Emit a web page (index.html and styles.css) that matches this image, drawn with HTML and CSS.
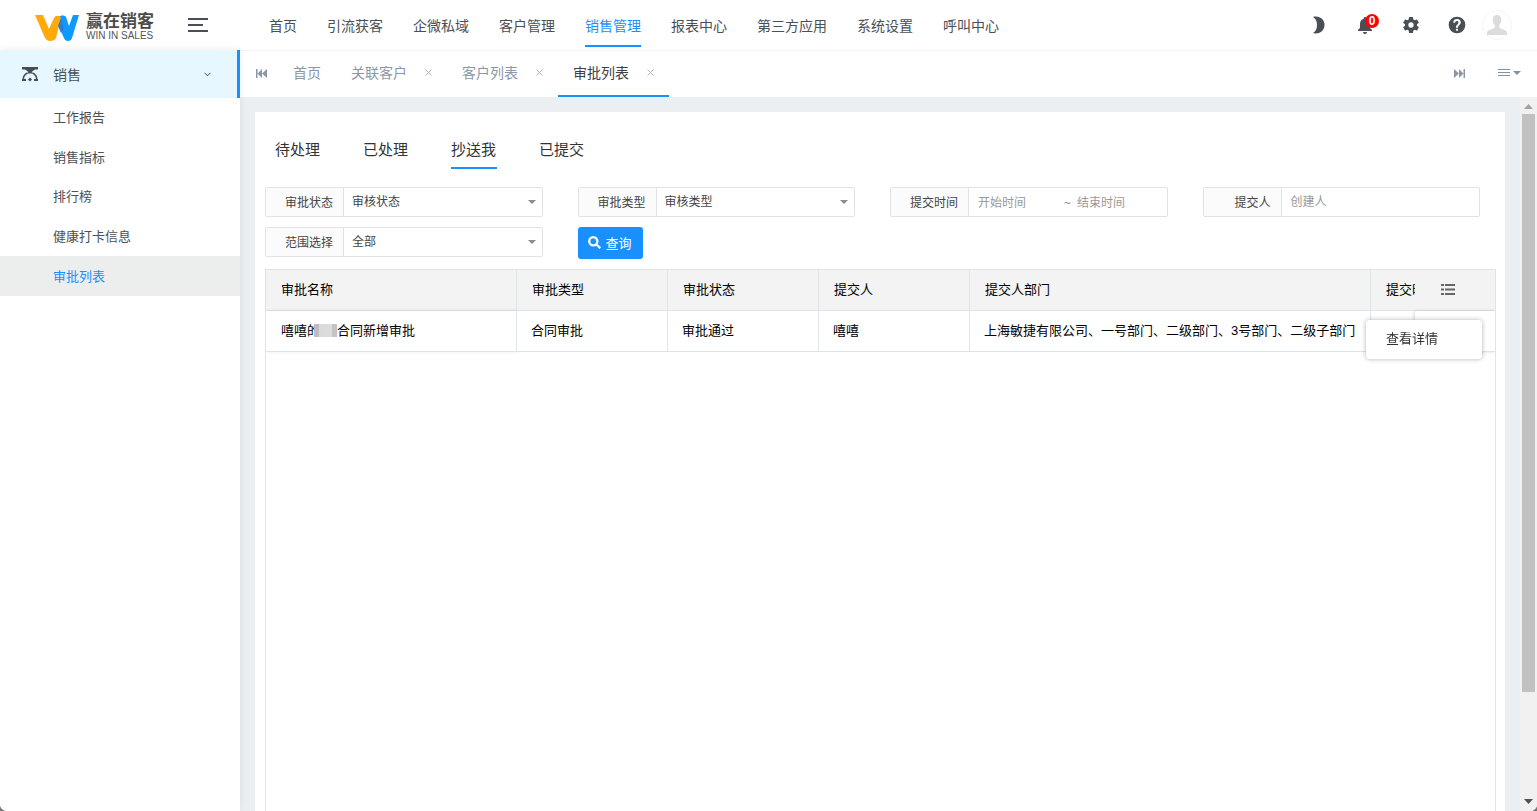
FILE: index.html
```html
<!DOCTYPE html>
<html lang="zh-CN">

<head>
    <meta charset="UTF-8">
    <meta name="viewport" content="width=device-width, initial-scale=1.0">
    <title>审批列表</title>
    <link rel="stylesheet" href="styles.css">
</head>

<body>
    <div class="app">
        <header class="header">
            <div class="brand">
                <svg class="brand-mark" width="44" height="26" viewBox="0 0 44 26">
                    <path fill="#0d99ff" d="M24 2c1-2 6-2 7 0l3 9 4-11h6L37 23c-1 4-7 4-8 0l-6-13z"/>
                    <path fill="#ffa90a" d="M0 0h8l6 14 5-11c1-3 6-3 7 0l-5 20c-2 4-9 4-11 0z"/>
                    <path fill="#2b7fd0" d="M26 3l3 11-3 4-3-7z"/>
                </svg>
                <div class="brand-text">
                    <span class="brand-cn">赢在销客</span>
                    <span class="brand-en">WIN IN SALES</span>
                </div>
            </div>
            <button class="icon-btn menu-toggle" aria-label="菜单">
                <svg width="20" height="14" viewBox="0 0 20 14" fill="#4a4f55">
                    <path d="M0 0h20v2H0zM0 6h15v2H0zM0 12h20v2H0z"/>
                </svg>
            </button>
            <nav class="nav">
                <a href="#">首页</a>
                <a href="#">引流获客</a>
                <a href="#">企微私域</a>
                <a href="#">客户管理</a>
                <a href="#" class="active">销售管理</a>
                <a href="#">报表中心</a>
                <a href="#">第三方应用</a>
                <a href="#">系统设置</a>
                <a href="#">呼叫中心</a>
            </nav>
            <div class="tools">
                <button class="icon-btn tool" aria-label="夜间模式">
                    <svg width="14" height="18" viewBox="0 0 14 18"><path d="M1 1c2-.7 5-.5 7 .5a8.500 8.500 0 0 1 0 15C6 17.500 3 17.700 1 17c3-2 4-4.500 4-8s-1-6-4-8z"/></svg>
                </button>
                <button class="icon-btn tool" aria-label="消息">
                    <svg width="16" height="18" viewBox="0 0 16 18"><path d="M8 1a1.300 1.300 0 0 0-1.300 1.300v.5C4.400 3.400 3 5.400 3 8v4L1 14v1h14v-1l-2-2V8c0-2.600-1.400-4.600-3.700-5.200v-.5A1.300 1.300 0 0 0 8 1zM6 16a2 2 0 0 0 4 0z"/></svg>
                    <span class="badge">0</span>
                </button>
                <button class="icon-btn tool" aria-label="设置">
                    <svg width="20" height="20" viewBox="0 0 24 24"><path d="M19.140 12.940a7.500 7.500 0 0 0 0-1.880l2.030-1.580a.5.500 0 0 0 .12-.61l-1.920-3.320a.5.500 0 0 0-.59-.22l-2.390.96a7 7 0 0 0-1.620-.94l-.36-2.540a.5.500 0 0 0-.48-.41h-3.840a.5.500 0 0 0-.47.410l-.36 2.540a7.300 7.300 0 0 0-1.620.94l-2.390-.96a.5.500 0 0 0-.59.220L2.740 8.870a.5.500 0 0 0 .12.610l2.030 1.580a7.500 7.500 0 0 0 0 1.880l-2.030 1.580a.5.500 0 0 0-.12.610l1.920 3.320c.12.220.37.290.59.220l2.390-.96c.5.380 1.030.7 1.620.94l.36 2.540c.05.240.24.410.48.410h3.840c.24 0 .44-.17.470-.41l.36-2.540a7.300 7.300 0 0 0 1.620-.94l2.390.96c.22.080.47 0 .59-.22l1.920-3.320a.5.500 0 0 0-.12-.61zM12 15.200a3.200 3.200 0 1 1 0-6.400 3.200 3.200 0 0 1 0 6.400z"/></svg>
                </button>
                <button class="icon-btn tool" aria-label="帮助">
                    <svg width="20" height="20" viewBox="0 0 24 24"><path d="M12 2a10 10 0 1 0 0 20 10 10 0 0 0 0-20zm1.200 17h-2.500v-2.500h2.500zm2.200-7.600l-.9.900c-.9.900-1.300 1.500-1.300 3h-2.500v-.6c0-1.100.5-2.100 1.200-2.800l1.300-1.300a2 2 0 1 0-3.400-1.400H7.500a4.500 4.500 0 1 1 9 0c0 .9-.5 1.600-1.100 2.200z"/></svg>
                </button>
                <button class="icon-btn avatar" aria-label="个人中心">
                    <svg width="20" height="20" viewBox="0 0 20 20" fill="#dcdcdc"><path d="M10 0c3 0 4.500 2 4.300 5-.1 2.400-1 4-2.100 5.200v2.300c1 1.500 6.800 2 7.800 4.500v3H0v-3c1-2.500 6.800-3 7.800-4.500v-2.300C6.700 9 5.800 7.400 5.700 5 5.500 2 7 0 10 0z"/></svg>
                </button>
            </div>
        </header>

        <div class="layout">
            <aside class="sidebar">
                <a href="#" class="side-title">
                    <svg width="16" height="15" viewBox="0 0 16 15">
                        <path fill="#464c52" d="M0 0h16v2.500h-3L9.500 5l1.500 1.500H5L6.500 5 3 2.500H0z"/>
                        <path fill="none" stroke="#464c52" stroke-width="1.600" d="M5.500 6C2.500 7.200 1.200 10 1.200 13M10.500 6c3 1.200 4.300 4 4.300 7"/>
                        <path fill="#464c52" d="M0 12h4v2H0zM12 12h4v2h-4zM8 10.500l2 2-2 2-2-2z"/>
                    </svg>
                    <span>销售</span>
                    <svg class="side-arrow" width="7" height="5" viewBox="0 0 7 5"><path fill="none" stroke="#50565c" d="M.5.800l3 3 3-3"/></svg>
                </a>
                <nav class="side-list">
                    <a href="#">工作报告</a>
                    <a href="#">销售指标</a>
                    <a href="#">排行榜</a>
                    <a href="#">健康打卡信息</a>
                    <a href="#" class="active">审批列表</a>
                </nav>
            </aside>

            <div class="main">
                <div class="page-tabs">
                    <button class="icon-btn tabs-prev" aria-label="向左">
                        <svg width="11" height="9" viewBox="0 0 11 9" fill="#8c97a6"><path d="M0 0h1.500v9H0zM6 0v9L1.500 4.500zM11 0v9L6 4.500z"/></svg>
                    </button>
                    <div class="page-tab"><a href="#">首页</a></div>
                    <div class="page-tab"><a href="#">关联客户</a><button class="close" aria-label="关闭"><svg width="7" height="7" viewBox="0 0 7 7"><path d="M.5.500l6 6M6.500.500l-6 6"/></svg></button></div>
                    <div class="page-tab"><a href="#">客户列表</a><button class="close" aria-label="关闭"><svg width="7" height="7" viewBox="0 0 7 7"><path d="M.5.500l6 6M6.500.500l-6 6"/></svg></button></div>
                    <div class="page-tab active"><a href="#">审批列表</a><button class="close" aria-label="关闭"><svg width="7" height="7" viewBox="0 0 7 7"><path d="M.5.500l6 6M6.500.500l-6 6"/></svg></button></div>
                    <div class="tabs-right">
                        <button class="icon-btn" aria-label="向右">
                            <svg width="11" height="9" viewBox="0 0 11 9" fill="#8c97a6"><path d="M9.500 0H11v9H9.500zM5 0v9l4.500-4.500zM0 0v9l5-4.500z"/></svg>
                        </button>
                        <button class="icon-btn" aria-label="标签操作">
                            <svg width="23" height="8" viewBox="0 0 23 8" fill="#8190a3"><path d="M0 0h12v1H0zM0 3h12v1H0zM0 6h12v1H0zM15 2h8l-4 4z"/></svg>
                        </button>
                    </div>
                </div>

                <div class="view">
                    <div class="card">
                        <nav class="status-tabs">
                            <a href="#">待处理</a>
                            <a href="#">已处理</a>
                            <a href="#" class="active">抄送我</a>
                            <a href="#">已提交</a>
                        </nav>

                        <form class="filters">
                            <div class="field">
                                <label for="status">审批状态</label>
                                <div class="control select">
                                    <select id="status"><option>审核状态</option></select>
                                </div>
                            </div>
                            <div class="field">
                                <label for="type">审批类型</label>
                                <div class="control select">
                                    <select id="type"><option>审核类型</option></select>
                                </div>
                            </div>
                            <div class="field">
                                <label for="start">提交时间</label>
                                <div class="control range">
                                    <input type="text" id="start" placeholder="开始时间">
                                    <span>~</span>
                                    <input type="text" id="end" placeholder="结束时间" aria-label="结束时间">
                                </div>
                            </div>
                            <div class="field">
                                <label for="creator">提交人</label>
                                <div class="control">
                                    <input type="text" id="creator" placeholder="创建人">
                                </div>
                            </div>
                            <div class="field">
                                <label for="scope">范围选择</label>
                                <div class="control select">
                                    <select id="scope"><option>全部</option></select>
                                </div>
                            </div>
                            <button type="button" class="search-btn">
                                <svg width="13" height="13" viewBox="0 0 13 13"><path fill="none" stroke="#fff" stroke-width="2.300" d="M5.300 1.200a4.100 4.100 0 1 1 0 8.200 4.100 4.100 0 0 1 0-8.200zM8.500 8.500l3.700 3.700"/></svg>
                                <span>查询</span>
                            </button>
                        </form>

                        <div class="table-box">
                            <table class="table">
                                <colgroup>
                                    <col class="col-name">
                                    <col class="col-mid">
                                    <col class="col-mid">
                                    <col class="col-mid">
                                    <col class="col-dept">
                                    <col class="col-time">
                                    <col class="col-action">
                                </colgroup>
                                <thead>
                                    <tr>
                                        <th>审批名称</th>
                                        <th>审批类型</th>
                                        <th>审批状态</th>
                                        <th>提交人</th>
                                        <th>提交人部门</th>
                                        <th>提交时间</th>
                                        <th class="fixed" aria-label="操作">
                                            <svg width="14" height="11" viewBox="0 0 14 11" fill="#666"><path d="M0 0h3v2H0zM4 0h10v2H4zM0 4.500h3v2H0zM4 4.500h10v2H4zM0 9h3v2H0zM4 9h10v2H4z"/></svg>
                                        </th>
                                    </tr>
                                </thead>
                                <tbody>
                                    <tr>
                                        <td class="name">嘻嘻的<span class="mask"></span>合同新增审批</td>
                                        <td>合同审批</td>
                                        <td>审批通过</td>
                                        <td>嘻嘻</td>
                                        <td>上海敏捷有限公司、一号部门、二级部门、3号部门、二级子部门</td>
                                        <td></td>
                                        <td class="fixed"></td>
                                    </tr>
                                </tbody>
                            </table>
                            <div class="popup">
                                <a href="#">查看详情</a>
                            </div>
                        </div>
                    </div>
                    <div class="scrollbar">
                        <svg width="9" height="5" viewBox="0 0 9 5" fill="#a3a3a3"><path d="M4.500 0L9 5H0z"/></svg>
                        <div class="track"><div class="thumb"></div></div>
                        <svg width="9" height="5" viewBox="0 0 9 5" fill="#505050"><path d="M4.500 5L9 0H0z"/></svg>
                    </div>
                </div>
            </div>
        </div>
    </div>
</body>

</html>
```

FILE: styles.css
```css
* {
    box-sizing: border-box;
}

body {
    margin: 0;
    background: #777;
    font-family: "Liberation Sans", "Noto Sans CJK SC", sans-serif;
    font-size: 14px;
    color: #333;
}

a {
    color: inherit;
    text-decoration: none;
}

button, input, select {
    font-family: inherit;
    margin: 0;
}

svg {
    display: block;
}

.app {
    display: flex;
    flex-direction: column;
    height: 100vh;
    background: #fff;
    border-radius: 0 0 7px 7px;
    overflow: hidden;
}

.icon-btn {
    display: flex;
    align-items: center;
    justify-content: center;
    padding: 0;
    border: none;
    background: none;
    cursor: pointer;
}

/* header */
.header {
    display: flex;
    align-items: center;
    height: 50px;
    flex: none;
    padding-right: 25px;
    background: #fff;
}

.brand {
    display: flex;
    align-items: center;
    gap: 7px;
    width: 188px;
    padding: 6px 0 0 35px;
}

.brand-text {
    display: flex;
    flex-direction: column;
    white-space: nowrap;
}

.brand-cn {
    font-size: 17px;
    line-height: 16px;
    font-weight: bold;
    color: #4c4c4c;
}

.brand-en {
    font-size: 10px;
    line-height: 12px;
    color: #555;
}

.menu-toggle {
    width: 20px;
    height: 50px;
    margin-right: 46px;
}

.nav {
    display: flex;
    flex: 1;
    white-space: nowrap;
}

.nav a {
    margin: 0 15px;
    height: 44px;
    line-height: 46px;
    border-bottom: 2px solid transparent;
    color: #4a4f55;
}

.nav .active {
    color: #1890ff;
    border-color: #1890ff;
}

.tools {
    display: flex;
    align-items: center;
    fill: #4a4f55;
}

.tool {
    position: relative;
    width: 46px;
    height: 50px;
}

.badge {
    position: absolute;
    top: 14px;
    left: 23px;
    width: 14px;
    height: 14px;
    border-radius: 50%;
    background: #f00;
    color: #fff;
    font-size: 12px;
    font-weight: bold;
    line-height: 14px;
    text-align: center;
}

.avatar {
    width: 30px;
    height: 30px;
    margin-left: 2px;
    border: 1px solid #f5f5f5;
    border-radius: 50%;
}

.layout {
    display: flex;
    flex: 1;
    min-height: 0;
}

/* sidebar */
.sidebar {
    position: relative;
    z-index: 1;
    width: 240px;
    flex: none;
    background: #fff;
    box-shadow: 0 0 8px rgba(0, 0, 0, 0.08);
    color: #4a4f55;
}

.side-title {
    display: flex;
    align-items: center;
    height: 48px;
    padding: 0 26px 0 22px;
    gap: 15px;
    background: #e6f7ff;
    border-right: 3px solid #1890ff;
}

.side-arrow {
    margin-left: auto;
}

.side-list {
    display: grid;
    grid-template-rows: repeat(5, 1fr);
    height: 198px;
    font-size: 13px;
}

.side-list a {
    display: flex;
    align-items: center;
    padding: 0 0 2px 53px;
}

.side-list .active {
    background: #eceeed;
    color: #1890ff;
}

.main {
    display: flex;
    flex-direction: column;
    flex: 1;
    min-width: 0;
}

/* opened pages */
.page-tabs {
    display: flex;
    height: 47px;
    flex: none;
    border-top: 1px solid #f6f6f6;
    background: #fff;
    color: #8c97a6;
}

.tabs-prev {
    width: 38px;
    padding: 0 0 2px 4px;
}

.page-tab {
    display: flex;
    align-items: center;
    height: 46px;
    padding: 0 15px 2px;
    border-bottom: 2px solid transparent;
    white-space: nowrap;
}

.page-tab.active {
    color: #3c4147;
    border-color: #1890ff;
}

.close {
    padding: 0;
    margin-left: 18px;
    border: none;
    background: none;
    stroke: #b4b4b4;
    cursor: pointer;
}

.tabs-right {
    display: flex;
    align-items: center;
    gap: 33px;
    margin-left: auto;
    padding: 0 16px 2px 0;
}

.view {
    display: flex;
    flex: 1;
    min-height: 0;
    background: #ebeff2;
}

.card {
    display: flex;
    flex-direction: column;
    flex: 1;
    min-width: 0;
    margin: 15px 15px 0 15px;
    background: #fff;
}

.status-tabs {
    display: flex;
    gap: 42px;
    padding: 18px 20px;
    font-size: 15px;
}

.status-tabs a {
    height: 39px;
    padding-right: 1px;
    line-height: 39px;
    border-bottom: 2px solid transparent;
}

.status-tabs .active {
    border-color: #1890ff;
}

/* filters */
.filters {
    display: grid;
    grid-template-columns: repeat(4, 1fr);
    row-gap: 10px;
    font-size: 12px;
}

.field {
    display: flex;
    height: 30px;
    margin: 0 25px 0 10px;
    border: 1px solid #e2e2e2;
    border-radius: 2px;
}

.field label {
    width: 78px;
    flex: none;
    padding-right: 10px;
    border-right: 1px solid #e2e2e2;
    background: #fbfbfb;
    line-height: 30px;
    text-align: right;
    color: #444;
}

.control {
    position: relative;
    display: flex;
    align-items: center;
    flex: 1;
    min-width: 0;
}

.control select, .control input {
    width: 100%;
    height: 26px;
    padding: 0 8px;
    border: none;
    background: transparent;
    outline: none;
    appearance: none;
    font-size: 12px;
    color: #444;
}

.control input {
    padding-left: 9px;
}

.control input::placeholder {
    color: #999;
}

.select::after {
    content: "";
    position: absolute;
    right: 6px;
    border: 4px solid transparent;
    border-top-color: #8c8c8c;
    border-bottom: none;
    pointer-events: none;
}

.range {
    padding-top: 2px;
    color: #888;
}

.range input:first-child {
    width: 95px;
    flex: none;
}

.range input:last-child {
    padding-left: 6px;
}

.search-btn {
    display: flex;
    align-items: center;
    justify-content: center;
    justify-self: start;
    gap: 4px;
    width: 65px;
    height: 32px;
    margin-left: 10px;
    padding: 0 0 2px;
    border: none;
    border-radius: 3px;
    background: #1890ff;
    color: #fff;
    font-size: 13px;
    cursor: pointer;
}

/* table */
.table-box {
    position: relative;
    flex: 1;
    min-height: 0;
    margin: 10px 9px 0 10px;
    border: 1px solid #dfe4ea;
    border-bottom: none;
    overflow: hidden;
}

.table {
    width: 100%;
    min-width: 1336px;
    table-layout: fixed;
    border-spacing: 0;
    font-size: 13px;
    color: #000;
}

.col-name {
    width: 251px;
}

.col-mid, .col-time {
    width: 151px;
}

.col-dept {
    width: 401px;
}

.col-action {
    width: 80px;
}

.table th, .table td {
    height: 41px;
    padding: 0 15px 4px;
    border-right: 1px solid #dfe4ea;
    border-bottom: 1px solid #dfe4ea;
    text-align: left;
    font-weight: normal;
    white-space: nowrap;
}

.table th {
    background: #f3f3f3;
}

.table td {
    padding: 0 14px 4px;
    background: #fff;
}

.table .name {
    padding-left: 15px;
    box-shadow: 1px 0 4px rgba(0, 0, 0, 0.08);
}

.table .fixed {
    position: sticky;
    right: 0;
    border-right: none;
}

.table th.fixed {
    padding: 0 0 2px 26px;
}

.table td.fixed {
    box-shadow: -1px 0 3px rgba(0, 0, 0, 0.15);
}

.mask {
    display: inline-block;
    position: relative;
    width: 23px;
    height: 13px;
    margin-left: -6px;
    vertical-align: -2px;
    background: linear-gradient(90deg, #bebcc0 5px, #dad9db 5px, #dddcdc 18px, #c5c3c5 18px);
}

.popup {
    position: absolute;
    top: 50px;
    right: 13px;
    width: 116px;
    padding: 0 20px 2px;
    border-radius: 4px;
    background: #fff;
    box-shadow: 0 0 5px rgba(0, 0, 0, 0.3);
    font-size: 13px;
    line-height: 37px;
}

/* scrollbar */
.scrollbar {
    display: flex;
    flex-direction: column;
    align-items: center;
    width: 17px;
    padding: 7px 0;
    background: #f1f1f1;
}

.track {
    flex: 1;
    width: 13px;
    margin: 5px 0;
}

.thumb {
    height: 85%;
    background: #c1c1c1;
}
```
